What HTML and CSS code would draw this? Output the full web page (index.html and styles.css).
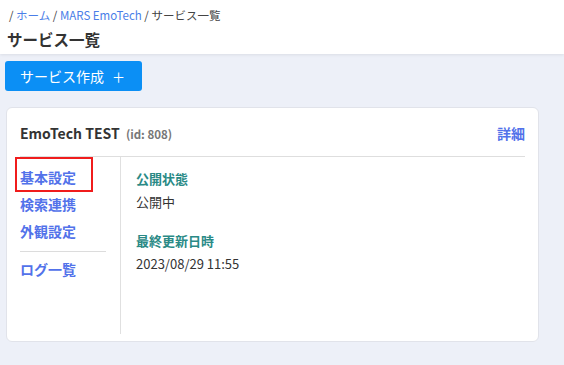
FILE: index.html
```html
<!DOCTYPE html>
<html>

<head>
    <title>サービス一覧</title>
    <link rel="stylesheet" href="styles.css">
</head>

<body>
    <header class="page-header">
        <div class="breadcrumb">
            / <a href="#">ホーム</a> / <a href="#">MARS EmoTech</a> / サービス一覧
        </div>
        <h1 class="page-title">サービス一覧</h1>
    </header>

    <main class="page-main">
        <button class="btn-create" type="button">サービス作成<span class="plus">＋</span></button>

        <div class="service-card">
            <div class="card-head">
                <div class="card-title">EmoTech TEST <span class="card-id">(id: 808)</span></div>
                <a href="#" class="detail-link">詳細</a>
            </div>

            <div class="card-body">
                <nav class="side-nav">
                    <a href="#" class="nav-item is-marked">基本設定<span class="mark"></span></a>
                    <a href="#" class="nav-item">検索連携</a>
                    <a href="#" class="nav-item">外観設定</a>
                    <hr class="nav-sep">
                    <a href="#" class="nav-item">ログ一覧</a>
                </nav>

                <div class="card-content">
                    <div class="field-label">公開状態</div>
                    <div class="field-value">公開中</div>

                    <div class="field-label field-gap">最終更新日時</div>
                    <div class="field-value">2023/08/29 11:55</div>
                </div>
            </div>
        </div>
    </main>
</body>

</html>
```

FILE: styles.css
```css
body {
    font-family: "Noto Sans CJK JP", "Noto Sans", sans-serif;
    background-color: #edf0f8;
    margin: 0;
    padding: 0;
    color: #333;
}

a {
    text-decoration: none;
}

.page-header {
    background-color: #fff;
    height: 54px;
    box-sizing: border-box;
    padding: 6px 7px 0 7px;
    box-shadow: 0 1px 3px rgba(0, 0, 0, 0.08);
}

.breadcrumb {
    font-size: 11.5px;
    line-height: 18px;
    color: #444;
    padding-left: 2px;
}

.breadcrumb a {
    color: #4a7ee8;
}

.page-title {
    margin: 4px 0 0 0;
    font-size: 15.5px;
    line-height: 22px;
    font-weight: bold;
    color: #333;
}

.page-main {
    padding: 7px 0 0 5px;
}

.btn-create {
    font-family: inherit;
    background-color: #0b8ff5;
    color: #fff;
    border: none;
    border-radius: 3px;
    width: 137px;
    height: 30px;
    padding: 0 0 0 15px;
    text-align: left;
    font-size: 14px;
    cursor: pointer;
}

.btn-create .plus {
    margin-left: 8px;
    font-size: 13px;
}

.service-card {
    background-color: #fff;
    border: 1px solid #e1e3ea;
    border-radius: 6px;
    width: 533px;
    box-sizing: border-box;
    margin: 16px 0 0 1px;
    padding: 0 13px 7px 13px;
}

.card-head {
    display: flex;
    justify-content: space-between;
    align-items: center;
    height: 46px;
    border-bottom: 1px solid #dedede;
    padding-top: 2px;
}

.card-title {
    font-size: 14px;
    font-weight: bold;
    color: #333;
}

.card-id {
    font-size: 11.5px;
    color: #777;
    margin-left: 3px;
}

.detail-link {
    font-size: 14px;
    font-weight: bold;
    color: #5272ea;
}

.card-body {
    display: flex;
}

.side-nav {
    width: 100px;
    flex-shrink: 0;
    border-right: 1px solid #e0e0e0;
    padding: 7px 0 0 0;
    height: 170px;
    box-sizing: content-box;
}

.nav-item {
    display: block;
    font-size: 14px;
    font-weight: bold;
    line-height: 27px;
    color: #5272ea;
}

.is-marked {
    position: relative;
}

.mark {
    position: absolute;
    left: -5px;
    top: -7px;
    width: 74px;
    height: 31px;
    border: 2px solid #f01c1c;
}

.nav-sep {
    border: none;
    border-top: 1px solid #dcdcdc;
    margin: 6px 14px 4px 0;
}

.card-content {
    padding: 12px 0 0 15px;
}

.field-label {
    font-size: 13px;
    font-weight: bold;
    line-height: 20px;
    color: #2a8a86;
}

.field-value {
    font-size: 13px;
    line-height: 20px;
    margin-top: 3px;
    color: #333;
}

.field-gap {
    margin-top: 19px;
}
```
